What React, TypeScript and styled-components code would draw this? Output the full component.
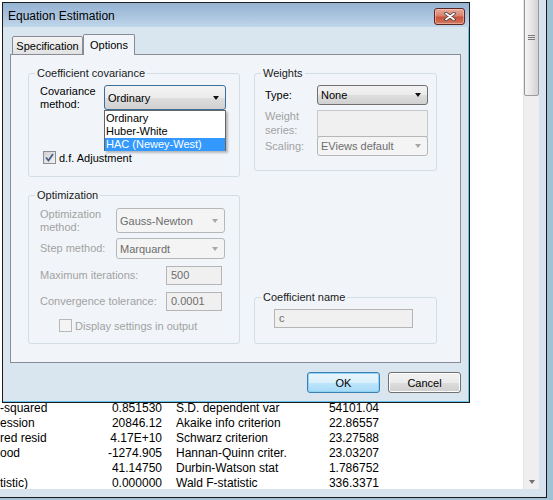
import React from "react";
import styled, { createGlobalStyle } from "styled-components";

type StatRow = [string, string, string, string];

// only the visible tail of the first column shows beside the dialog
const stats: StatRow[] = [
  ["-squared", "0.851530", "S.D. dependent var", "54101.04"],
  ["ession", "20846.12", "Akaike info criterion", "22.86557"],
  ["red resid", "4.17E+10", "Schwarz criterion", "23.27588"],
  ["ood", "-1274.905", "Hannan-Quinn criter.", "23.03207"],
  ["", "41.14750", "Durbin-Watson stat", "1.786752"],
  ["tistic)", "0.000000", "Wald F-statistic", "336.3371"],
];

const covOptions = ["Ordinary", "Huber-White", "HAC (Newey-West)"];

function App() {
  return (
    <>
      <GlobalStyle />
      <Desktop>
        <OutputWindow>
          <OutputBody>
            <StatsTable>
              {stats.map((r, i) => (
                <React.Fragment key={i}>
                  <StatCell>{r[0]}</StatCell>
                  <StatCell $right>{r[1]}</StatCell>
                  <StatCell $pad>{r[2]}</StatCell>
                  <StatCell $right>{r[3]}</StatCell>
                </React.Fragment>
              ))}
            </StatsTable>
          </OutputBody>
          <ScrollBar>
            <Thumb>
              <Grip />
            </Thumb>
            <DownArrow />
          </ScrollBar>
        </OutputWindow>

        <Dialog>
          <TitleBar>
            <Title>Equation Estimation</Title>
            <CloseButton>
              <svg width="12" height="9" viewBox="0 0 12 9">
                <path d="M2 1.5 L10 7.5 M10 1.5 L2 7.5" stroke="#3a3a3a" strokeWidth="3.4" strokeLinecap="round" />
                <path d="M2 1.5 L10 7.5 M10 1.5 L2 7.5" stroke="#fff" strokeWidth="1.8" strokeLinecap="round" />
              </svg>
            </CloseButton>
          </TitleBar>

          <DialogBody>
            <TabStrip>
              <Tab $w={71}>Specification</Tab>
              <Tab $w={52} $active>
                Options
              </Tab>
            </TabStrip>

            <Panel>
              <Columns>
                <LeftCol>
                  <Group $h={111}>
                    <Legend>Coefficient covariance</Legend>
                    <GroupBody $pt={5} $pl={11}>
                      <Row $cols="64px 122px" $h={21}>
                        <Label>
                          Covariance
                          <br />
                          method:
                        </Label>
                        <SelectWrap>
                          <Select $focus>
                            Ordinary
                            <Arrow />
                          </Select>
                          <DropList>
                            {covOptions.map((o, i) => (
                              <DropItem key={o} $selected={i === 2}>
                                {o}
                              </DropItem>
                            ))}
                          </DropList>
                        </SelectWrap>
                      </Row>
                      <CheckRow $mt={45} $pl={3}>
                        <CheckBox $checked>
                          <svg width="9" height="9" viewBox="0 0 9 9">
                            <path d="M1 4.5 L3.5 7.5 L8 1" fill="none" stroke="#4a5f8f" strokeWidth="1.8" />
                          </svg>
                        </CheckBox>
                        <span>d.f. Adjustment</span>
                      </CheckRow>
                    </GroupBody>
                  </Group>

                  <Group $h={156}>
                    <Legend>Optimization</Legend>
                    <GroupBody $pt={6} $pl={11}>
                      <Row $cols="76px 109px" $h={21}>
                        <Label $disabled>
                          Optimization
                          <br />
                          method:
                        </Label>
                        <Select $disabled>
                          Gauss-Newton
                          <Arrow $disabled />
                        </Select>
                      </Row>
                      <Row $cols="76px 109px" $h={21} $mt={9}>
                        <Label $disabled>Step method:</Label>
                        <Select $disabled>
                          Marquardt
                          <Arrow $disabled />
                        </Select>
                      </Row>
                      <Row $cols="126px 56px" $h={19} $mt={7}>
                        <Label $disabled>Maximum iterations:</Label>
                        <TextField>500</TextField>
                      </Row>
                      <Row $cols="126px 56px" $h={19} $mt={7}>
                        <Label $disabled>Convergence tolerance:</Label>
                        <TextField>0.0001</TextField>
                      </Row>
                      <CheckRow $mt={8} $pl={19} $disabled>
                        <CheckBox $disabled />
                        <span>Display settings in output</span>
                      </CheckRow>
                    </GroupBody>
                  </Group>
                </LeftCol>

                <RightCol>
                  <Group $h={105}>
                    <Legend>Weights</Legend>
                    <GroupBody $pt={5} $pl={10}>
                      <Row $cols="52px 111px" $h={20}>
                        <Label>Type:</Label>
                        <Select>
                          None
                          <Arrow />
                        </Select>
                      </Row>
                      <Row $cols="52px 111px" $h={19} $mt={5}>
                        <Label $disabled $top>
                          Weight
                          <br />
                          series:
                        </Label>
                        <TextField $empty />
                      </Row>
                      <Row $cols="52px 111px" $h={20} $mt={7}>
                        <Label $disabled>Scaling:</Label>
                        <Select $disabled>
                          EViews default
                          <Arrow $disabled />
                        </Select>
                      </Row>
                    </GroupBody>
                  </Group>

                  <Group $h={54}>
                    <Legend>Coefficient name</Legend>
                    <GroupBody $pt={5} $pl={19}>
                      <Row $cols="139px" $h={19}>
                        <TextField>c</TextField>
                      </Row>
                    </GroupBody>
                  </Group>
                </RightCol>
              </Columns>
            </Panel>

            <ButtonRow>
              <Button $default>OK</Button>
              <Button>Cancel</Button>
            </ButtonRow>
          </DialogBody>
        </Dialog>
      </Desktop>
    </>
  );
}

export default App;

const GlobalStyle = createGlobalStyle`
  html, body {
    margin: 0;
    padding: 0;
  }
  body {
    background: #9fc2d6;
    font-family: "Liberation Sans", Arial, sans-serif;
    overflow: hidden;
  }
`;

const Desktop = styled.div`
  position: relative;
  width: 553px;
  height: 500px;
  overflow: hidden;
  background: #9fc2d6;
`;

/* background EViews output window */
const OutputWindow = styled.div`
  box-sizing: border-box;
  width: 547px;
  height: 498px;
  display: flex;
  padding: 0 7px 8px 0;
  background: #d7e4ed;
  border-right: 1px solid #1b1b1b;
  border-bottom: 1px solid #1b1b1b;
`;

const OutputBody = styled.div`
  flex: 1;
  background: #fff;
  overflow: hidden;
  display: flex;
  flex-direction: column;
  justify-content: flex-end;
`;

const StatsTable = styled.div`
  display: grid;
  grid-template-columns: 91px 71px 154px 63px;
  margin-bottom: -2px;
  font-family: "Liberation Sans", Arial, sans-serif;
  font-size: 12px;
  line-height: 15px;
  color: #000;
`;

const StatCell = styled.div<{ $right?: boolean; $pad?: boolean }>`
  white-space: nowrap;
  text-align: ${(p) => (p.$right ? "right" : "left")};
  padding-left: ${(p) => (p.$pad ? 14 : 0)}px;
`;

const ScrollBar = styled.div`
  width: 16px;
  display: flex;
  flex-direction: column;
  justify-content: space-between;
  align-items: center;
  background: #efefef;
  border-left: 1px solid #e4e4e4;
  box-sizing: border-box;
`;

const Thumb = styled.div`
  box-sizing: border-box;
  width: 15px;
  height: 98px;
  margin-top: -2px;
  border: 1px solid #9a9a9a;
  border-radius: 2px;
  background: linear-gradient(90deg, #f4f4f4 0%, #e6e6e6 50%, #d2d2d2 100%);
  display: flex;
  align-items: center;
  justify-content: center;
`;

const Grip = styled.div`
  width: 7px;
  height: 5px;
  margin-top: -20px;
  background: repeating-linear-gradient(#7a7a7a 0 1px, transparent 1px 2px);
`;

const DownArrow = styled.div`
  width: 0;
  height: 0;
  margin-bottom: 5px;
  border-left: 3.5px solid transparent;
  border-right: 3.5px solid transparent;
  border-top: 4px solid #707070;
`;

/* dialog window */
const Dialog = styled.div`
  position: absolute;
  left: 2px;
  top: 2px;
  box-sizing: border-box;
  width: 468px;
  height: 401px;
  border: 1px solid #1c1c1c;
  background: #dae6ef;
  box-shadow: inset -1px -1px 0 #63c4ee;
  display: flex;
  flex-direction: column;
  font-family: "Liberation Sans", Arial, sans-serif;
  font-size: 11px;
  color: #000;
`;

const TitleBar = styled.div`
  height: 24px;
  flex: none;
  display: flex;
  justify-content: space-between;
  align-items: flex-start;
  padding: 0 4px 0 5px;
  background: linear-gradient(#95b2d2 0%, #a9c3de 50%, #c0d6ea 100%);
`;

const Title = styled.div`
  font-size: 12px;
  line-height: 24px;
  margin-top: 1px;
`;

const CloseButton = styled.div`
  box-sizing: border-box;
  width: 31px;
  height: 17px;
  margin-top: 5px;
  border: 1px solid #5b2620;
  border-radius: 3px;
  background: linear-gradient(#e9ab9b 0%, #d9826f 45%, #c8533c 55%, #d27a5e 100%);
  box-shadow: inset 0 0 0 1px rgba(255, 210, 200, 0.5);
  display: flex;
  align-items: center;
  justify-content: center;
`;

const DialogBody = styled.div`
  flex: 1;
  display: flex;
  flex-direction: column;
  padding: 7px 8px 0 7px;
`;

const TabStrip = styled.div`
  display: flex;
  align-items: flex-end;
  height: 21px;
  padding-left: 2px;
  margin-bottom: -1px;
  position: relative;
  z-index: 1;
`;

const Tab = styled.div<{ $active?: boolean; $w: number }>`
  box-sizing: border-box;
  width: ${(p) => p.$w}px;
  height: ${(p) => (p.$active ? 21 : 19)}px;
  border: 1px solid #898c95;
  border-bottom: ${(p) => (p.$active ? "none" : "1px solid #898c95")};
  border-radius: 2px 2px 0 0;
  background: ${(p) => (p.$active ? "#f1f5f9" : "linear-gradient(#f3f3f3, #e2e2e2)")};
  text-align: center;
  line-height: ${(p) => (p.$active ? 21 : 18)}px;
  white-space: nowrap;
`;

const Panel = styled.div`
  box-sizing: border-box;
  height: 309px;
  border: 1px solid #898c95;
  background: #f1f5f9;
  padding: 11px 0 0 17px;
`;

const Columns = styled.div`
  display: grid;
  grid-template-columns: 212px 183px;
  column-gap: 14px;
`;

const LeftCol = styled.div`
  display: flex;
  flex-direction: column;
  gap: 11px;
`;

const RightCol = styled.div`
  display: flex;
  flex-direction: column;
  justify-content: space-between;
`;

const Group = styled.fieldset<{ $h: number }>`
  box-sizing: border-box;
  height: ${(p) => p.$h}px;
  margin: 0;
  padding: 0;
  min-width: 0;
  border: 1px solid #d3dde4;
  border-radius: 3px;
`;

const Legend = styled.legend`
  margin-left: 6px;
  padding: 0 2px;
  font-size: 11px;
  line-height: 14px;
  color: #1a1a1a;
`;

const GroupBody = styled.div<{ $pt: number; $pl: number }>`
  padding: ${(p) => p.$pt}px 0 0 ${(p) => p.$pl}px;
`;

const Row = styled.div<{ $cols: string; $h: number; $mt?: number }>`
  display: grid;
  grid-template-columns: ${(p) => p.$cols};
  align-items: center;
  height: ${(p) => p.$h}px;
  margin-top: ${(p) => p.$mt ?? 0}px;
`;

const Label = styled.div<{ $disabled?: boolean; $top?: boolean }>`
  line-height: ${(p) => (p.$top ? 14 : 12.5)}px;
  color: ${(p) => (p.$disabled ? "#a2a2a2" : "#000")};
  white-space: nowrap;
  align-self: ${(p) => (p.$top ? "start" : "center")};
  margin-top: ${(p) => (p.$top ? -1 : 0)}px;
`;

const SelectWrap = styled.div`
  position: relative;
  height: 100%;
`;

const Select = styled.div<{ $disabled?: boolean; $focus?: boolean }>`
  box-sizing: border-box;
  height: 100%;
  display: flex;
  align-items: center;
  justify-content: space-between;
  padding: 0 6px 0 3px;
  border: 1px solid ${(p) => (p.$disabled ? "#b4b8bb" : p.$focus ? "#3c6f99" : "#707070")};
  border-radius: 3px;
  background: ${(p) =>
    p.$disabled
      ? "#f4f4f4"
      : "linear-gradient(#f3f3f3 0%, #ebebeb 50%, #dedede 51%, #d0d0d0 100%)"};
  color: ${(p) => (p.$disabled ? "#6d6d6d" : "#000")};
  white-space: nowrap;
`;

const Arrow = styled.span<{ $disabled?: boolean }>`
  width: 0;
  height: 0;
  border-left: 3.5px solid transparent;
  border-right: 3.5px solid transparent;
  border-top: 4px solid ${(p) => (p.$disabled ? "#a7a7a7" : "#111")};
`;

const DropList = styled.div`
  position: absolute;
  left: 0;
  right: 0;
  top: 100%;
  box-sizing: border-box;
  padding: 1px 0 0;
  height: 41px;
  background: #fff;
  border: 1px solid #646464;
  box-shadow: 2px 2px 2px rgba(0, 0, 0, 0.25);
  z-index: 2;
`;

const DropItem = styled.div<{ $selected?: boolean }>`
  height: 13px;
  line-height: 13px;
  padding-left: 1px;
  background: ${(p) => (p.$selected ? "#3399ff" : "transparent")};
  color: ${(p) => (p.$selected ? "#fff" : "#000")};
  white-space: nowrap;
`;

const TextField = styled.div<{ $empty?: boolean }>`
  box-sizing: border-box;
  height: 100%;
  padding-left: 4px;
  line-height: 17px;
  border: 1px solid ${(p) => (p.$empty ? "#c9c9c9" : "#b5b5b5")};
  background: #f0f0f0;
  color: #6d6d6d;
`;

const CheckRow = styled.div<{ $mt: number; $pl: number; $disabled?: boolean }>`
  display: flex;
  align-items: center;
  gap: 3px;
  height: 13px;
  margin-top: ${(p) => p.$mt}px;
  padding-left: ${(p) => p.$pl}px;
  color: ${(p) => (p.$disabled ? "#a2a2a2" : "#000")};
  white-space: nowrap;
`;

const CheckBox = styled.div<{ $checked?: boolean; $disabled?: boolean }>`
  box-sizing: border-box;
  width: 13px;
  height: 13px;
  border: 1px solid ${(p) => (p.$disabled ? "#b8b8b8" : "#8e8f8f")};
  background: ${(p) =>
    p.$disabled ? "#f4f4f4" : "linear-gradient(135deg, #d0d0d0 0%, #e6e6e6 60%, #f2f2f2 100%)"};
  display: flex;
  align-items: center;
  justify-content: center;
`;

const ButtonRow = styled.div`
  display: flex;
  justify-content: flex-end;
  gap: 8px;
  margin-top: 9px;
`;

const Button = styled.div<{ $default?: boolean }>`
  box-sizing: border-box;
  width: 73px;
  height: 21px;
  display: flex;
  align-items: center;
  justify-content: center;
  border: 1px solid ${(p) => (p.$default ? "#3c7fb1" : "#707070")};
  border-radius: 3px;
  background: ${(p) =>
    p.$default
      ? "linear-gradient(#eaf6fd 0%, #d9f0fc 50%, #bee6fd 51%, #a7d9f5 100%)"
      : "linear-gradient(#f2f2f2 0%, #ebebeb 50%, #dddddd 51%, #cfcfcf 100%)"};
  box-shadow: ${(p) => (p.$default ? "inset 0 0 0 1px #8fd3f5" : "inset 0 0 0 1px #fcfcfc")};
`;
